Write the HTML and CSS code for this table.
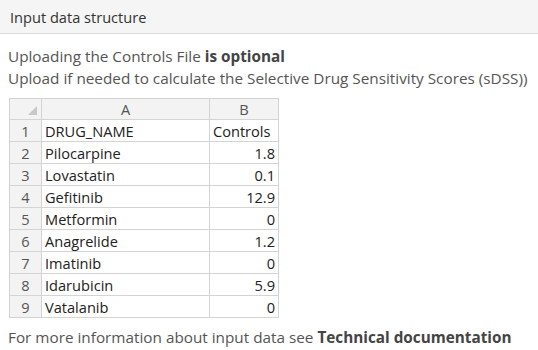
FILE: index.html
```html
<!DOCTYPE html>
<html>
<head>
<meta charset="utf-8">
<link rel="stylesheet" href="styles.css">
</head>
<body>
<div class="panel">
  <div class="panel-heading">Input data structure</div>
  <div class="panel-body">
    <p class="intro">Uploading the Controls File <b>is optional</b><br>Upload if needed to calculate the Selective Drug Sensitivity Scores (sDSS))</p>
    <table class="sheet">
      <colgroup><col class="c-rn"><col class="c-a"><col class="c-b"></colgroup>
      <tr class="colhead"><td class="corner"><span class="tri"></span></td><td>A</td><td>B</td></tr>
      <tr><td class="rn">1</td><td>DRUG_NAME</td><td>Controls</td></tr>
      <tr><td class="rn">2</td><td>Pilocarpine</td><td class="num">1.8</td></tr>
      <tr><td class="rn">3</td><td>Lovastatin</td><td class="num">0.1</td></tr>
      <tr><td class="rn">4</td><td>Gefitinib</td><td class="num">12.9</td></tr>
      <tr><td class="rn">5</td><td>Metformin</td><td class="num">0</td></tr>
      <tr><td class="rn">6</td><td>Anagrelide</td><td class="num">1.2</td></tr>
      <tr><td class="rn">7</td><td>Imatinib</td><td class="num">0</td></tr>
      <tr><td class="rn">8</td><td>Idarubicin</td><td class="num">5.9</td></tr>
      <tr><td class="rn">9</td><td>Vatalanib</td><td class="num">0</td></tr>
    </table>
    <p class="more">For more information about input data see <b>Technical documentation</b></p>
  </div>
</div>
</body>
</html>
```
FILE: styles.css
```css
body {
  margin: 0;
  font-family: "Open Sans", sans-serif;
  font-size: 15.3px;
  color: #555;
  background: #fff;
}
.panel-heading {
  background: #f5f5f5;
  border-bottom: 1px solid #ddd;
  color: #333;
  font-size: 14.6px;
  height: 34px;
  line-height: 34px;
  padding: 0 10px;
  box-sizing: border-box;
}
.panel-body {
  padding: 11px 8px 0 8px;
}
.intro {
  margin: 0 0 9px 0;
  line-height: 22px;
}
.intro b, .more b { color: #444; }
.sheet {
  border-collapse: collapse;
  table-layout: fixed;
  width: 269px;
  font-family: "Open Sans", sans-serif;
  font-size: 14.6px;
  color: #222;
  margin-left: 1px;
}
.c-rn { width: 32px; }
.c-a { width: 168px; }
.c-b { width: 69px; }
.sheet td {
  border: 1px solid #d4d4d4;
  height: 22px;
  padding: 0 3px;
  line-height: 20px;
  box-sizing: border-box;
  white-space: nowrap;
}
.sheet .rn {
  background: #f3f3f3;
  color: #555;
  text-align: center;
  padding: 0;
}
.sheet .colhead td {
  background: #f3f3f3;
  color: #555;
  text-align: center;
  height: 21px;
}
.sheet .colhead .corner {
  position: relative;
}
.tri {
  position: absolute;
  right: 4px;
  bottom: 4px;
  width: 0;
  height: 0;
  border-left: 9px solid transparent;
  border-bottom: 9px solid #c8c8c8;
}
.sheet .num { text-align: right; }
.more {
  margin: 9px 0 0 0;
  line-height: 20px;
}
```
